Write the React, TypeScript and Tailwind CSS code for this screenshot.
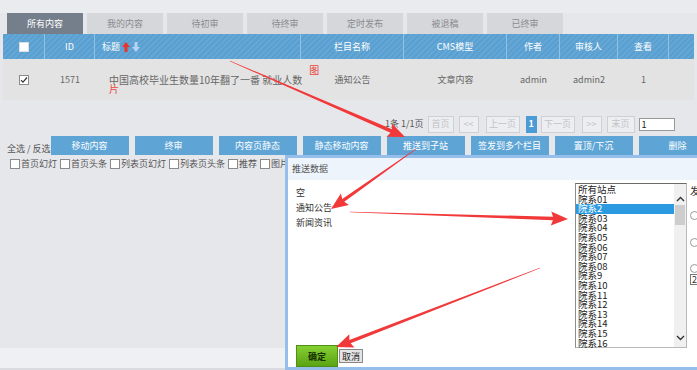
import { ReactNode } from 'react';

const font = "font-['Microsoft_YaHei','Noto_Sans_CJK_SC',sans-serif]";

const tabs = ['所有内容', '我的内容', '待初审', '待终审', '定时发布', '被退稿', '已终审'];

const actions = [
  '移动内容',
  '终审',
  '内容页静态',
  '静态移动内容',
  '推送到子站',
  '签发到多个栏目',
  '置顶/下沉',
  '删除',
];

const flags = ['首页幻灯', '首页头条', '列表页幻灯', '列表页头条', '推荐', '图片'];

const sites = [
  '所有站点',
  '院系01',
  '院系2',
  '院系03',
  '院系04',
  '院系05',
  '院系06',
  '院系07',
  '院系08',
  '院系9',
  '院系10',
  '院系11',
  '院系12',
  '院系13',
  '院系14',
  '院系15',
  '院系16',
];

const HeadCell = ({ w, children }: { w: string; children?: ReactNode }) => (
  <div
    className={`${w} flex-none h-full flex items-center justify-center border-r border-[#8ec3e4] text-white text-[9px]`}
  >
    {children}
  </div>
);

const PageBtn = ({ label, w }: { label: string; w: string }) => (
  <div
    className={`${w} h-[17px] flex items-center justify-center border border-[#cfd0d4] bg-[#eceef1] text-[9px] text-[#c2c3c6]`}
  >
    {label}
  </div>
);

// red annotation arrow, thin tail getting wider towards the head
const arrowPoints = (x1: number, y1: number, x2: number, y2: number) => {
  const dx = x2 - x1;
  const dy = y2 - y1;
  const len = Math.hypot(dx, dy);
  const ux = dx / len;
  const uy = dy / len;
  const nx = -uy;
  const ny = ux;
  const headLen = 15;
  const headW = 7;
  const bx = x2 - ux * headLen;
  const by = y2 - uy * headLen;
  const pts = [
    [x1 + nx * 0.3, y1 + ny * 0.3],
    [bx + nx * 1.8, by + ny * 1.8],
    [bx - ux * 2 + nx * headW, by - uy * 2 + ny * headW],
    [x2, y2],
    [bx - ux * 2 - nx * headW, by - uy * 2 - ny * headW],
    [bx - nx * 1.8, by - ny * 1.8],
    [x1 - nx * 0.3, y1 - ny * 0.3],
  ];
  return pts.map((p) => p.join(',')).join(' ');
};

const Arrows = () => (
  <svg
    className="absolute inset-0 pointer-events-none"
    width={697}
    height={370}
    viewBox="0 0 697 370"
  >
    <g fill="#f2393a">
      <polygon points={arrowPoints(230, 61, 405, 137)} />
      <polygon points={arrowPoints(416, 149, 331, 209)} />
      <polygon points={arrowPoints(350, 212, 568, 219)} />
      <polygon points={arrowPoints(540, 268, 336, 347)} />
    </g>
  </svg>
);

const Box = ({ checked }: { checked?: boolean }) => (
  <div className="w-[10px] h-[10px] flex-none border border-[#8a8a8a] bg-white flex items-center justify-center">
    {checked && (
      <svg width="8" height="8" viewBox="0 0 8 8">
        <path d="M1 4.2 L3 6.2 L7 1.5" stroke="#333" strokeWidth="1.2" fill="none" />
      </svg>
    )}
  </div>
);

const PushDialog = () => (
  <div className="absolute left-[285px] top-[155px] w-[420px] h-[215px] border-[3px] border-[#95bfea] bg-white flex flex-col">
    <div className="h-[22px] bg-[#eef4fc] flex items-center pl-[4px] text-[9px] text-[#555]">
      推送数据
    </div>
    <div className="flex-1 flex min-h-0">
      <div className="w-[290px] flex flex-col pl-[8px] pt-[5px] text-[9px] text-[#333] leading-[15px]">
        <div>空</div>
        <div>通知公告</div>
        <div>新闻资讯</div>
        <div className="mt-auto flex items-center gap-[1px]">
          <div className="w-[42px] h-[22px] bg-[linear-gradient(#86cf32,#5aa315)] border border-[#4f9010] flex items-center justify-center text-[9px] font-bold text-[#163000]">
            确定
          </div>
          <div className="w-[24px] h-[14px] bg-[#e4e4e4] border border-[#888] flex items-center justify-center text-[9px] text-[#222]">
            取消
          </div>
        </div>
      </div>
      <div className="w-[112px] flex-none pt-[3px]">
        <div className="h-[165px] border border-[#b9b9b9] border-t-[#6b6b6b] border-l-[#8d8d8d] flex bg-white">
          <div className="flex-1 text-[9.5px] leading-[9.6px] text-[#222] pt-[1px]">
            {sites.map((s) => (
              <div
                key={s}
                className={`h-[9.6px] pl-[2px] whitespace-nowrap ${s === '院系2' ? 'bg-[#2b9ae0] text-white' : ''}`}
              >
                {s}
              </div>
            ))}
          </div>
          <div className="w-[12px] bg-[#f0f0f0] flex flex-col items-center pt-[12px] pb-[6px]">
            <svg width="9" height="6" viewBox="0 0 9 6">
              <path d="M1 5 L4.5 1.5 L8 5" stroke="#333" strokeWidth="1.4" fill="none" />
            </svg>
            <div className="w-[10px] h-[20px] bg-[#cdcdcd] mt-[3px]" />
            <div className="flex-1" />
            <svg width="9" height="6" viewBox="0 0 9 6">
              <path d="M1 1 L4.5 4.5 L8 1" stroke="#333" strokeWidth="1.4" fill="none" />
            </svg>
          </div>
        </div>
      </div>
      <div className="flex-1 pl-[3px] pt-[3px] text-[10px] text-[#333]">
        <div>发</div>
        <div className="mt-[13px] w-[9px] h-[9px] rounded-full border border-[#999]" />
        <div className="mt-[18px] w-[9px] h-[9px] rounded-full border border-[#999]" />
        <div className="mt-[17px] w-[9px] h-[9px] rounded-full border border-[#999]" />
        <div className="mt-[1px] w-[12px] h-[11px] border border-[#777] text-[9px] leading-[9px] pl-[1px]">
          2
        </div>
      </div>
    </div>
  </div>
);

export default function App() {
  return (
    <div
      className={`relative w-[697px] h-[370px] overflow-hidden bg-[#e6e7eb] flex flex-col whitespace-nowrap ${font}`}
    >
      <div className="h-[13px] bg-[#eaebee]" />
      <div className="px-[3px]">
        <div className="flex gap-[4px] pl-[4px] h-[21px]">
          {tabs.map((t, i) => (
            <div
              key={t}
              className={`w-[76px] flex items-center justify-center text-[9px] ${
                i === 0 ? 'bg-[#757e8b] text-white' : 'bg-[#d5d7db] text-[#8a8b8e]'
              }`}
            >
              {t}
            </div>
          ))}
        </div>
        <div className="h-[25px] flex bg-[repeating-linear-gradient(135deg,#62a7d5_0px,#62a7d5_2px,#5a9fcf_2px,#5a9fcf_4px)]">
          <HeadCell w="w-[42px]">
            <div className="w-[10px] h-[10px] bg-white border border-[#ddd]" />
          </HeadCell>
          <HeadCell w="w-[50px]">ID</HeadCell>
          <div className="w-[206px] flex-none h-full flex items-center pl-[7px] gap-[2px] border-r border-[#8ec3e4] text-white text-[9px]">
            标题
            <svg width="8" height="10" viewBox="0 0 8 10">
              <path d="M4 0 L8 5 L5.5 5 L5.5 10 L2.5 10 L2.5 5 L0 5 Z" fill="#e8342c" />
            </svg>
            <svg width="8" height="10" viewBox="0 0 8 10">
              <path d="M4 10 L8 5 L5.5 5 L5.5 0 L2.5 0 L2.5 5 L0 5 Z" fill="#b4d3f5" />
            </svg>
          </div>
          <HeadCell w="w-[103px]">栏目名称</HeadCell>
          <HeadCell w="w-[103px]">CMS模型</HeadCell>
          <HeadCell w="w-[53px]">作者</HeadCell>
          <HeadCell w="w-[58px]">审核人</HeadCell>
          <HeadCell w="w-[51px]">查看</HeadCell>
          <div className="flex-1" />
        </div>
        <div className="h-[41px] flex items-center bg-[#e3e3e3] text-[9px] text-[#666]">
          <div className="w-[42px] flex justify-center">
            <Box checked />
          </div>
          <div className="w-[50px] text-center">1571</div>
          <div className="w-[206px] pl-[14px] mt-[9px] text-[10px] leading-[9px]">
            <div>
              中国高校毕业生数量10年翻了一番 就业人数
              <span className="relative -top-[10px] ml-[7px] text-[#e8463c]">图</span>
            </div>
            <div className="text-[#e8463c]">片</div>
          </div>
          <div className="w-[103px] text-center">通知公告</div>
          <div className="w-[103px] text-center">文章内容</div>
          <div className="w-[53px] text-center">admin</div>
          <div className="w-[58px] text-center">admin2</div>
          <div className="w-[51px] text-center">1</div>
        </div>
      </div>

      <div className="mt-[15px] h-[18px] flex items-center pl-[385px] gap-[4px] text-[9px] text-[#555]">
        <span>1条 1/1页</span>
        <PageBtn label="首页" w="w-[26px]" />
        <PageBtn label="<<" w="w-[20px] ml-[1px]" />
        <PageBtn label="上一页" w="w-[34px] ml-[3px]" />
        <div className="w-[11px] h-[17px] bg-[#4b9bd6] text-white text-[9px] font-bold flex items-center justify-center ml-[2px]">
          1
        </div>
        <PageBtn label="下一页" w="w-[34px]" />
        <PageBtn label=">>" w="w-[20px] ml-[3px]" />
        <PageBtn label="末页" w="w-[28px] ml-[1px]" />
        <div className="w-[36px] h-[13px] bg-white border border-[#999] text-[9px] leading-[11px] pl-[2px] text-[#222]">
          1
        </div>
      </div>

      <div className="mt-[3px] h-[19px] flex items-end pl-[7px]">
        <span className="w-[46px] text-[9px] text-[#555] leading-[12px]">全选 / 反选</span>
        <div className="flex gap-[6px] h-full">
          {actions.map((a) => (
            <div
              key={a}
              className="w-[78px] h-full bg-[#5ea5d6] flex items-center justify-center text-[9px] text-white"
            >
              {a}
            </div>
          ))}
        </div>
      </div>

      <div className="mt-[3px] flex items-center pl-[10px] gap-[3px] text-[9px] text-[#555] leading-[12px]">
        {flags.map((f) => (
          <div key={f} className="flex items-center gap-[1px]">
            <Box />
            <span>{f}</span>
          </div>
        ))}
      </div>

      <div className="flex-1" />
      <div className="h-[20px] bg-[#eff0f4]" />
      <div className="h-[2px] bg-[#d9dbe0]" />

      <PushDialog />
      <Arrows />
    </div>
  );
}
